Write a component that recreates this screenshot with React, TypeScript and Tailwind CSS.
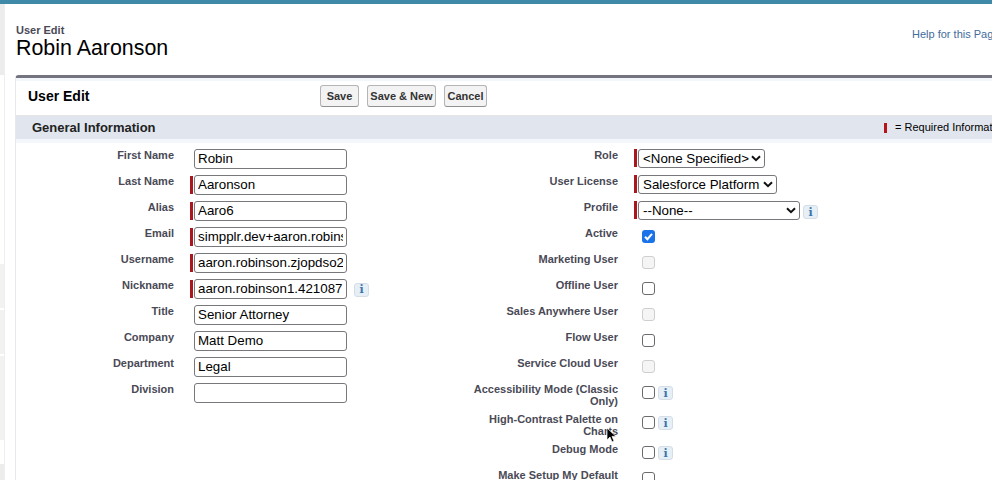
const font = { fontFamily: '"Liberation Sans", Arial, sans-serif' };

function Info({ far, low }: { far?: boolean; low?: boolean }) {
  return (
    <span className={`flex h-[14px] w-[15px] shrink-0 items-center justify-center rounded-[3px] border border-[#d5dde6] bg-[#e6eef6] font-['DejaVu_Serif',serif] text-[11px] font-bold leading-none text-[#3d74ab] ${far ? 'ml-[7px] mt-[1px]' : low ? 'ml-[3px] mt-[4px]' : 'ml-[3px]'}`}>
      i
    </span>
  );
}

function Req() {
  return <span className="block h-[18px] w-[3px] shrink-0 bg-[#a9181f]" />;
}

function TextRow({ label, value, req, info }: { label: string; value: string; req?: boolean; info?: boolean }) {
  return (
    <div className="flex h-[26px] items-start">
      <div className="w-[158px] text-right text-[11px] font-bold leading-[13px] text-[#4a4a56]">{label}</div>
      <div className="ml-[16px] w-[4px] pt-[1px]">{req && <Req />}</div>
      <div className="flex items-center">
        <div className="h-[20px] w-[153px] rounded-[3px] border border-[#77777c] bg-white pl-[3px] pr-[3px] text-[13.33px] leading-[18px] text-black">
          <div className="overflow-hidden whitespace-nowrap">{value}</div>
        </div>
        {info && <Info far />}
      </div>
    </div>
  );
}

function SelectRow({ label, value, width, info }: { label: string; value: string; width: string; info?: boolean }) {
  return (
    <div className="flex h-[26px] items-start">
      <div className="w-[148px] text-right text-[11px] font-bold leading-[13px] text-[#4a4a56]">{label}</div>
      <div className="ml-[16px] w-[4px]"><Req /></div>
      <div className={`flex h-[19px] items-center justify-between rounded-[3px] border border-[#77777c] bg-white pl-[4px] pr-[3px] text-[13.33px] leading-[17px] text-black ${width}`}>
        <span className="whitespace-nowrap">{value}</span>
        <svg width="10" height="7" viewBox="0 0 10 7" className="shrink-0"><path d="M1 1.2 5 5.2 9 1.2" fill="none" stroke="#111" strokeWidth="2" /></svg>
      </div>
      {info && <Info low />}
    </div>
  );
}

function CheckRow({ label, state, info, tall }: { label: string; state: 'on' | 'off' | 'disabled'; info?: boolean; tall?: boolean }) {
  return (
    <div className={`flex items-start ${tall ? 'h-[30px]' : 'h-[26px]'}`}>
      <div className="w-[148px] text-right text-[11px] font-bold leading-[12px] text-[#4a4a56]">{label}</div>
      <div className="ml-[24px] flex items-start pt-[3px]">
        {state === 'on' && (
          <span className="flex h-[13px] w-[13px] items-center justify-center rounded-[3px] bg-[#1a73e8]">
            <svg width="11" height="11" viewBox="0 0 11 11"><path d="M2 5.8 4.4 8.2 9 2.8" fill="none" stroke="#fff" strokeWidth="2" /></svg>
          </span>
        )}
        {state === 'off' && <span className="h-[13px] w-[13px] rounded-[3px] border border-[#6b6b6f] bg-white" />}
        {state === 'disabled' && <span className="h-[13px] w-[13px] rounded-[3px] border border-[#cfcfcf] bg-[#f5f5f5]" />}
        {info && <Info />}
      </div>
    </div>
  );
}

function Btn({ children, width }: { children: string; width: string }) {
  return (
    <button className={`flex h-[22px] items-center justify-center rounded-[3px] border border-[#b5b5b5] border-b-[#909090] bg-[#f3f3f3] text-[11px] font-bold text-[#333] ${width}`}>
      {children}
    </button>
  );
}

export default function App() {
  return (
    <div className="h-[480px] w-[992px] overflow-hidden bg-white relative" style={font}>
      <div className="h-[4px] bg-[#3f8aa8]" />
      <div className="flex h-[476px]">
        <div className="flex w-[5px] shrink-0 flex-col border-r border-[#eeeeee]">
          <div className="h-[71px] bg-[#ececec]" />
          <div className="mt-[189px] h-[44px] bg-[#f2f2f2]" />
          <div className="mt-[2px] h-[44px] bg-[#f2f2f2]" />
          <div className="mt-[2px] h-[84px] bg-[#f2f2f2]" />
          <div className="mt-[24px] h-[16px] bg-[#ececec]" />
        </div>
        <div className="ml-[10px] min-w-0 flex-1 overflow-hidden">
          <div className="flex h-[71px] items-start pl-[1px]">
            <div className="w-[896px] shrink-0 pt-[19px]">
              <div className="text-[11px] font-bold leading-[14px] text-[#4a4a56]">User Edit</div>
              <div className="text-[21.4px] leading-[22px] text-black">Robin Aaronson</div>
            </div>
            <div className="mt-[23px] whitespace-nowrap text-[11px] leading-[14px] text-[#3f6c9c]">Help for this Page</div>
          </div>
          <div className="h-[405px] rounded-tl-[4px] border-l border-t-[3px] border-[#e8e8ec] border-t-[#747480]">
            <div className="flex h-[38px] items-center border-b border-t-[3px] border-b-[#e6e6e6] border-t-[#f3f6fa] bg-white pb-[4px]">
              <div className="w-[304px] pl-[12px] text-[14px] font-bold leading-none text-black">User Edit</div>
              <div className="flex gap-[8px]">
                <Btn width="w-[39px]">Save</Btn>
                <Btn width="w-[69px]">Save &amp; New</Btn>
                <Btn width="w-[43px]">Cancel</Btn>
              </div>
            </div>
            <div className="flex h-[23px] items-center overflow-hidden bg-[#e1e6ee] pl-[16px]">
              <span className="w-[852px] shrink-0 text-[13px] font-bold leading-none text-[#222]">General Information</span>
              <span className="h-[10px] w-[3px] shrink-0 bg-[#b8121b]" />
              <span className="ml-[8px] shrink-0 whitespace-nowrap text-[11px] text-black">= Required Information</span>
            </div>
            <div className="flex border-t-[4px] border-[#f3f6fa] pt-[6px]">
              <div className="w-[428px] shrink-0">
                <TextRow label="First Name" value="Robin" />
                <TextRow label="Last Name" value="Aaronson" req />
                <TextRow label="Alias" value="Aaro6" req />
                <TextRow label="Email" value="simpplr.dev+aaron.robinson" req />
                <TextRow label="Username" value="aaron.robinson.zjopdso2" req />
                <TextRow label="Nickname" value="aaron.robinson1.421087" req info />
                <TextRow label="Title" value="Senior Attorney" />
                <TextRow label="Company" value="Matt Demo" />
                <TextRow label="Department" value="Legal" />
                <TextRow label="Division" value="" />
              </div>
              <div className="min-w-0 flex-1 pl-[26px]">
                <SelectRow label="Role" value="<None Specified>" width="w-[127px]" />
                <SelectRow label="User License" value="Salesforce Platform" width="w-[139px]" />
                <SelectRow label="Profile" value="--None--" width="w-[162px]" info />
                <CheckRow label="Active" state="on" />
                <CheckRow label="Marketing User" state="disabled" />
                <CheckRow label="Offline User" state="off" />
                <CheckRow label="Sales Anywhere User" state="disabled" />
                <CheckRow label="Flow User" state="off" />
                <CheckRow label="Service Cloud User" state="disabled" />
                <CheckRow label="Accessibility Mode (Classic Only)" state="off" info tall />
                <CheckRow label="High-Contrast Palette on Charts" state="off" info tall />
                <CheckRow label="Debug Mode" state="off" info />
                <CheckRow label="Make Setup My Default" state="off" />
              </div>
            </div>
          </div>
        </div>
      </div>
      <svg className="absolute left-[606px] top-[427px]" width="12" height="17" viewBox="0 0 12 17">
        <path d="M1 1v12l3-3 2 5 2-1-2-4.6h4z" fill="#000" stroke="#fff" strokeWidth="0.7" />
      </svg>
    </div>
  );
}
